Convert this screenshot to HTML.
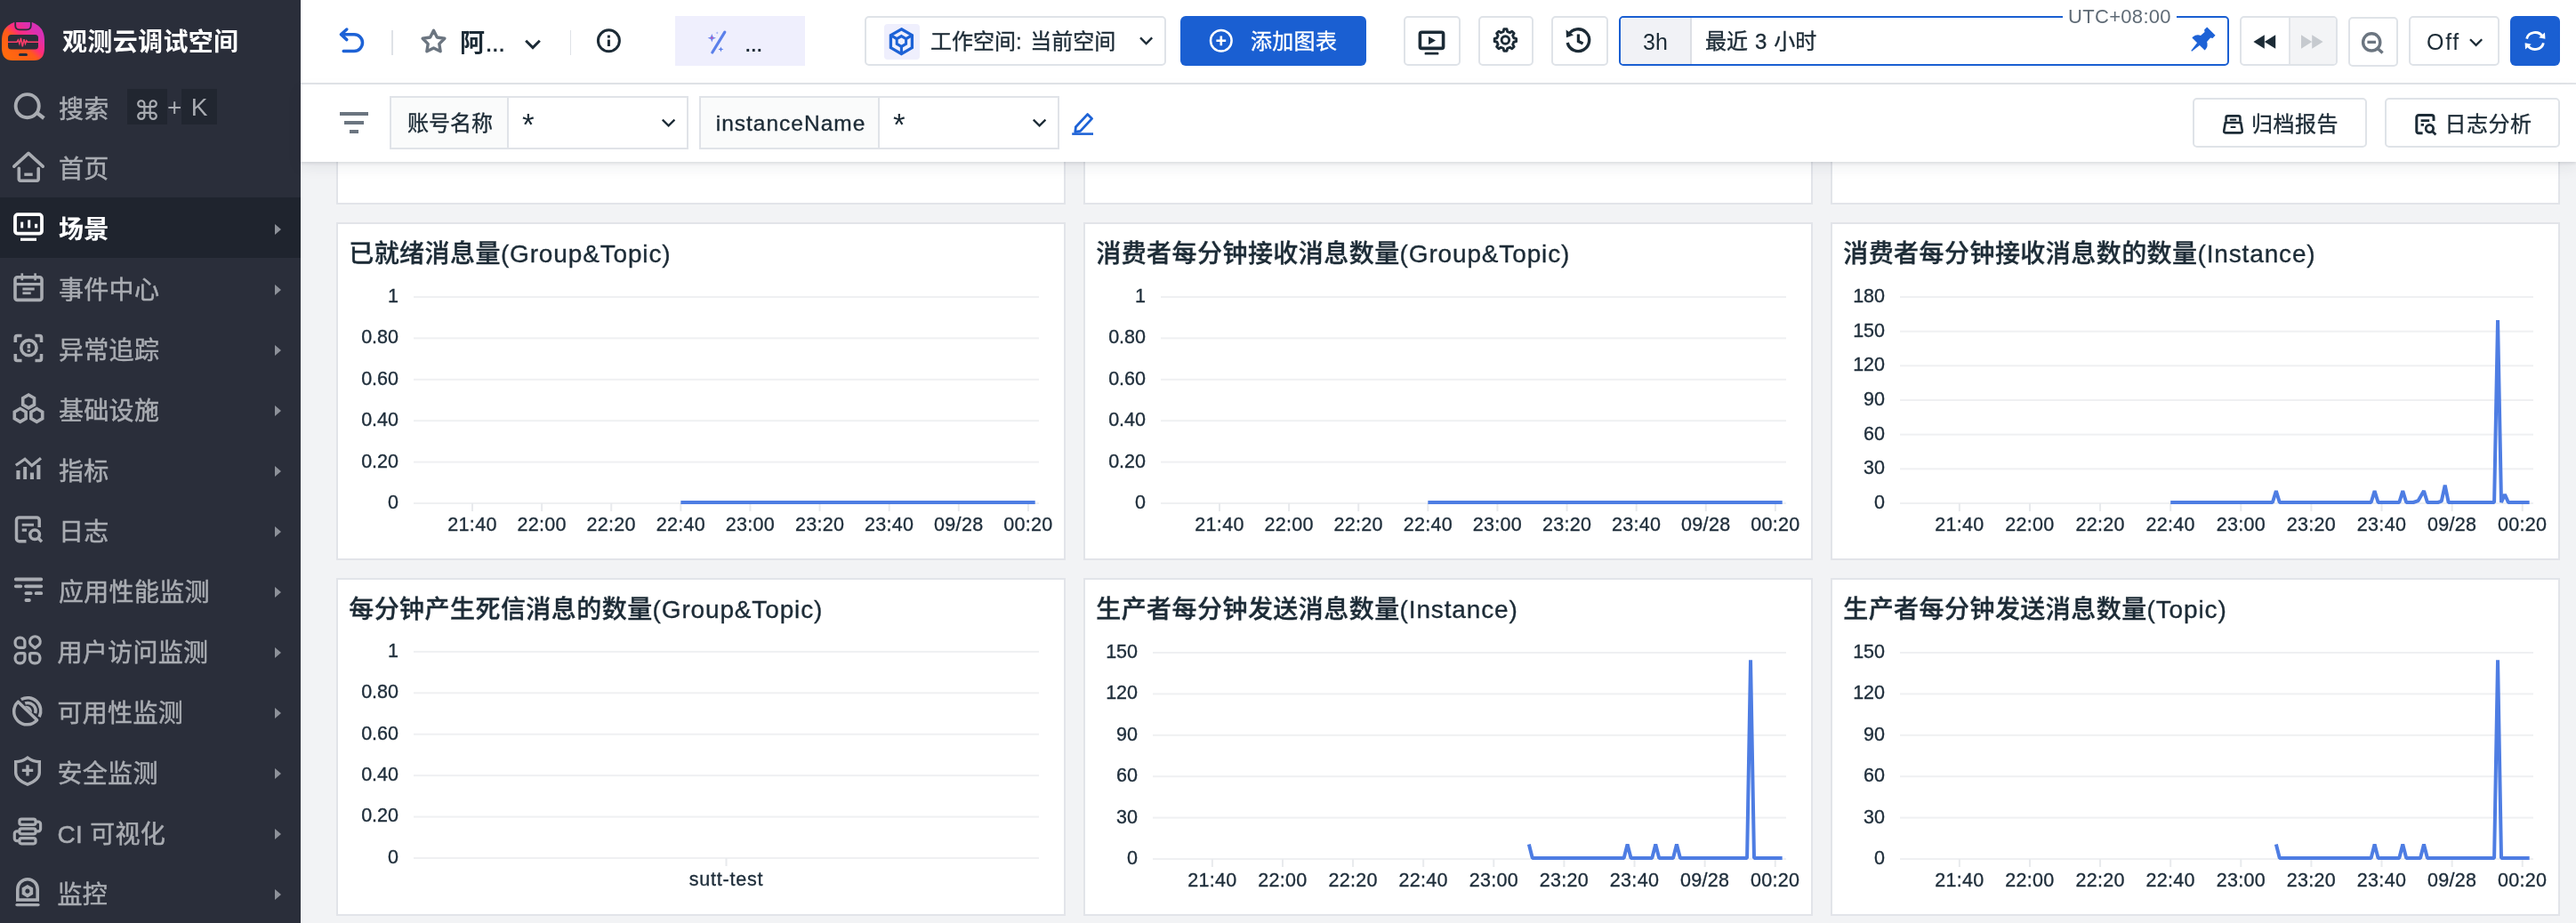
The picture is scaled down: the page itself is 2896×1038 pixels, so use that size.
<!DOCTYPE html><html lang="zh-CN"><head><meta charset="utf-8"><title>观测云</title><style>

*{box-sizing:border-box;margin:0;padding:0}
html{background:#f2f3f5}
#side,#head,#filt,.panel{will-change:transform}
html,body{width:2896px;height:1038px;overflow:hidden;background:#f2f3f5;font-family:"Liberation Sans", "Noto Sans CJK SC", sans-serif;color:#1c2b36}
.abs{position:absolute}
#side{position:absolute;left:0;top:0;width:338px;height:1038px;background:#2a2e3a;overflow:hidden}
#side .title{position:absolute;left:70px;top:26px;height:44px;line-height:44px;font-size:28px;font-weight:700;color:#fff;white-space:nowrap;letter-spacing:0.35px}
.row{position:absolute;left:0;width:338px;height:68px}
.row.act{background:#1f242e}
.row svg.ic{position:absolute;left:12px;top:14px;width:40px;height:40px;overflow:visible}
.row .tx{position:absolute;left:66px;top:2px;height:68px;line-height:69px;font-size:28px;color:#a9acb2;white-space:nowrap;letter-spacing:0.3px;-webkit-text-stroke:0.5px currentColor}
.row.act .tx{color:#fff;font-weight:700;-webkit-text-stroke:0.2px #fff}
.row .ar{position:absolute;left:309px;top:30px;width:0;height:0;border-left:7px solid #8d9199;border-top:6px solid transparent;border-bottom:6px solid transparent}
.kbd{position:absolute;top:14px;height:40px;background:#212630;color:#a9acb2;font-size:28px;line-height:40px;text-align:center}
#head{position:absolute;left:338px;top:0;width:2558px;height:95px;background:#fff;border-bottom:2px solid #e2e5e9}
#filt{position:absolute;left:338px;top:95px;width:2558px;height:87px;background:#fff;box-shadow:0 2px 3px rgba(30,40,60,.10),0 6px 16px rgba(30,40,60,.07);z-index:5}
.btn{position:absolute;border:2px solid #dfe3e8;border-radius:5px;background:#fff}
.t24{font-size:24px;white-space:nowrap;position:absolute;-webkit-text-stroke:0.35px currentColor}
.panel{position:absolute;width:820px;background:#fff;border:2px solid #e2e4e9}
.panel svg{position:absolute;left:-2px;top:-2px}
svg text{font-family:"Liberation Sans", "Noto Sans CJK SC", sans-serif;stroke-width:0.35px}
</style></head><body>
<div class="panel" style="left:378px;top:120px;height:110px"></div>
<div class="panel" style="left:1218px;top:120px;height:110px"></div>
<div class="panel" style="left:2058px;top:120px;height:110px"></div>
<div class="panel" style="left:378px;top:250px;height:380px"><svg width="820" height="380" viewBox="0 0 820 380"><text x="14.2" y="45" font-size="28" font-weight="500" fill="#1c2b36" stroke="#1c2b36" style="letter-spacing:0.45px">已就绪消息量<tspan style="letter-spacing:0.85px">(Group&amp;Topic)</tspan></text><rect x="87" y="83.00" width="703.0" height="2" fill="#eff0f2"/><text x="70" y="89.90" font-size="21.5" text-anchor="end" fill="#1e2d3a" stroke="#1e2d3a">1</text><rect x="87" y="129.40" width="703.0" height="2" fill="#eff0f2"/><text x="70" y="136.30" font-size="21.5" text-anchor="end" fill="#1e2d3a" stroke="#1e2d3a">0.80</text><rect x="87" y="175.80" width="703.0" height="2" fill="#eff0f2"/><text x="70" y="182.70" font-size="21.5" text-anchor="end" fill="#1e2d3a" stroke="#1e2d3a">0.60</text><rect x="87" y="222.20" width="703.0" height="2" fill="#eff0f2"/><text x="70" y="229.10" font-size="21.5" text-anchor="end" fill="#1e2d3a" stroke="#1e2d3a">0.40</text><rect x="87" y="268.60" width="703.0" height="2" fill="#eff0f2"/><text x="70" y="275.50" font-size="21.5" text-anchor="end" fill="#1e2d3a" stroke="#1e2d3a">0.20</text><rect x="87" y="315.00" width="703.0" height="2" fill="#eff0f2"/><text x="70" y="321.90" font-size="21.5" text-anchor="end" fill="#1e2d3a" stroke="#1e2d3a">0</text><rect x="152.00" y="316.0" width="2" height="9" fill="#e8eaed"/><text x="153.00" y="347.0" font-size="21.5" text-anchor="middle" fill="#1e2d3a" stroke="#1e2d3a" style="letter-spacing:0.3px">21:40</text><rect x="230.11" y="316.0" width="2" height="9" fill="#e8eaed"/><text x="231.11" y="347.0" font-size="21.5" text-anchor="middle" fill="#1e2d3a" stroke="#1e2d3a" style="letter-spacing:0.3px">22:00</text><rect x="308.23" y="316.0" width="2" height="9" fill="#e8eaed"/><text x="309.23" y="347.0" font-size="21.5" text-anchor="middle" fill="#1e2d3a" stroke="#1e2d3a" style="letter-spacing:0.3px">22:20</text><rect x="386.34" y="316.0" width="2" height="9" fill="#e8eaed"/><text x="387.34" y="347.0" font-size="21.5" text-anchor="middle" fill="#1e2d3a" stroke="#1e2d3a" style="letter-spacing:0.3px">22:40</text><rect x="464.45" y="316.0" width="2" height="9" fill="#e8eaed"/><text x="465.45" y="347.0" font-size="21.5" text-anchor="middle" fill="#1e2d3a" stroke="#1e2d3a" style="letter-spacing:0.3px">23:00</text><rect x="542.56" y="316.0" width="2" height="9" fill="#e8eaed"/><text x="543.56" y="347.0" font-size="21.5" text-anchor="middle" fill="#1e2d3a" stroke="#1e2d3a" style="letter-spacing:0.3px">23:20</text><rect x="620.67" y="316.0" width="2" height="9" fill="#e8eaed"/><text x="621.67" y="347.0" font-size="21.5" text-anchor="middle" fill="#1e2d3a" stroke="#1e2d3a" style="letter-spacing:0.3px">23:40</text><rect x="698.78" y="316.0" width="2" height="9" fill="#e8eaed"/><text x="699.78" y="347.0" font-size="21.5" text-anchor="middle" fill="#1e2d3a" stroke="#1e2d3a" style="letter-spacing:0.3px">09/28</text><rect x="776.89" y="316.0" width="2" height="9" fill="#e8eaed"/><text x="777.89" y="347.0" font-size="21.5" text-anchor="middle" fill="#1e2d3a" stroke="#1e2d3a" style="letter-spacing:0.3px">00:20</text><path d="M387.34 315.00 L785.70 315.00" fill="none" stroke="#4e7de3" stroke-width="4" stroke-linejoin="bevel" stroke-linecap="butt"/></svg></div>
<div class="panel" style="left:1218px;top:250px;height:380px"><svg width="820" height="380" viewBox="0 0 820 380"><text x="14.2" y="45" font-size="28" font-weight="500" fill="#1c2b36" stroke="#1c2b36" style="letter-spacing:0.45px">消费者每分钟接收消息数量<tspan style="letter-spacing:0.85px">(Group&amp;Topic)</tspan></text><rect x="87" y="83.00" width="703.0" height="2" fill="#eff0f2"/><text x="70" y="89.90" font-size="21.5" text-anchor="end" fill="#1e2d3a" stroke="#1e2d3a">1</text><rect x="87" y="129.40" width="703.0" height="2" fill="#eff0f2"/><text x="70" y="136.30" font-size="21.5" text-anchor="end" fill="#1e2d3a" stroke="#1e2d3a">0.80</text><rect x="87" y="175.80" width="703.0" height="2" fill="#eff0f2"/><text x="70" y="182.70" font-size="21.5" text-anchor="end" fill="#1e2d3a" stroke="#1e2d3a">0.60</text><rect x="87" y="222.20" width="703.0" height="2" fill="#eff0f2"/><text x="70" y="229.10" font-size="21.5" text-anchor="end" fill="#1e2d3a" stroke="#1e2d3a">0.40</text><rect x="87" y="268.60" width="703.0" height="2" fill="#eff0f2"/><text x="70" y="275.50" font-size="21.5" text-anchor="end" fill="#1e2d3a" stroke="#1e2d3a">0.20</text><rect x="87" y="315.00" width="703.0" height="2" fill="#eff0f2"/><text x="70" y="321.90" font-size="21.5" text-anchor="end" fill="#1e2d3a" stroke="#1e2d3a">0</text><rect x="152.00" y="316.0" width="2" height="9" fill="#e8eaed"/><text x="153.00" y="347.0" font-size="21.5" text-anchor="middle" fill="#1e2d3a" stroke="#1e2d3a" style="letter-spacing:0.3px">21:40</text><rect x="230.11" y="316.0" width="2" height="9" fill="#e8eaed"/><text x="231.11" y="347.0" font-size="21.5" text-anchor="middle" fill="#1e2d3a" stroke="#1e2d3a" style="letter-spacing:0.3px">22:00</text><rect x="308.23" y="316.0" width="2" height="9" fill="#e8eaed"/><text x="309.23" y="347.0" font-size="21.5" text-anchor="middle" fill="#1e2d3a" stroke="#1e2d3a" style="letter-spacing:0.3px">22:20</text><rect x="386.34" y="316.0" width="2" height="9" fill="#e8eaed"/><text x="387.34" y="347.0" font-size="21.5" text-anchor="middle" fill="#1e2d3a" stroke="#1e2d3a" style="letter-spacing:0.3px">22:40</text><rect x="464.45" y="316.0" width="2" height="9" fill="#e8eaed"/><text x="465.45" y="347.0" font-size="21.5" text-anchor="middle" fill="#1e2d3a" stroke="#1e2d3a" style="letter-spacing:0.3px">23:00</text><rect x="542.56" y="316.0" width="2" height="9" fill="#e8eaed"/><text x="543.56" y="347.0" font-size="21.5" text-anchor="middle" fill="#1e2d3a" stroke="#1e2d3a" style="letter-spacing:0.3px">23:20</text><rect x="620.67" y="316.0" width="2" height="9" fill="#e8eaed"/><text x="621.67" y="347.0" font-size="21.5" text-anchor="middle" fill="#1e2d3a" stroke="#1e2d3a" style="letter-spacing:0.3px">23:40</text><rect x="698.78" y="316.0" width="2" height="9" fill="#e8eaed"/><text x="699.78" y="347.0" font-size="21.5" text-anchor="middle" fill="#1e2d3a" stroke="#1e2d3a" style="letter-spacing:0.3px">09/28</text><rect x="776.89" y="316.0" width="2" height="9" fill="#e8eaed"/><text x="777.89" y="347.0" font-size="21.5" text-anchor="middle" fill="#1e2d3a" stroke="#1e2d3a" style="letter-spacing:0.3px">00:20</text><path d="M387.34 315.00 L785.70 315.00" fill="none" stroke="#4e7de3" stroke-width="4" stroke-linejoin="bevel" stroke-linecap="butt"/></svg></div>
<div class="panel" style="left:2058px;top:250px;height:380px"><svg width="820" height="380" viewBox="0 0 820 380"><text x="14.2" y="45" font-size="28" font-weight="500" fill="#1c2b36" stroke="#1c2b36" style="letter-spacing:0.45px">消费者每分钟接收消息数的数量<tspan style="letter-spacing:0.85px">(Instance)</tspan></text><rect x="78" y="83.00" width="712.0" height="2" fill="#eff0f2"/><text x="61" y="89.90" font-size="21.5" text-anchor="end" fill="#1e2d3a" stroke="#1e2d3a">180</text><rect x="78" y="121.67" width="712.0" height="2" fill="#eff0f2"/><text x="61" y="128.57" font-size="21.5" text-anchor="end" fill="#1e2d3a" stroke="#1e2d3a">150</text><rect x="78" y="160.33" width="712.0" height="2" fill="#eff0f2"/><text x="61" y="167.23" font-size="21.5" text-anchor="end" fill="#1e2d3a" stroke="#1e2d3a">120</text><rect x="78" y="199.00" width="712.0" height="2" fill="#eff0f2"/><text x="61" y="205.90" font-size="21.5" text-anchor="end" fill="#1e2d3a" stroke="#1e2d3a">90</text><rect x="78" y="237.67" width="712.0" height="2" fill="#eff0f2"/><text x="61" y="244.57" font-size="21.5" text-anchor="end" fill="#1e2d3a" stroke="#1e2d3a">60</text><rect x="78" y="276.33" width="712.0" height="2" fill="#eff0f2"/><text x="61" y="283.23" font-size="21.5" text-anchor="end" fill="#1e2d3a" stroke="#1e2d3a">30</text><rect x="78" y="315.00" width="712.0" height="2" fill="#eff0f2"/><text x="61" y="321.90" font-size="21.5" text-anchor="end" fill="#1e2d3a" stroke="#1e2d3a">0</text><rect x="143.85" y="316.0" width="2" height="9" fill="#e8eaed"/><text x="144.85" y="347.0" font-size="21.5" text-anchor="middle" fill="#1e2d3a" stroke="#1e2d3a" style="letter-spacing:0.3px">21:40</text><rect x="222.96" y="316.0" width="2" height="9" fill="#e8eaed"/><text x="223.96" y="347.0" font-size="21.5" text-anchor="middle" fill="#1e2d3a" stroke="#1e2d3a" style="letter-spacing:0.3px">22:00</text><rect x="302.07" y="316.0" width="2" height="9" fill="#e8eaed"/><text x="303.07" y="347.0" font-size="21.5" text-anchor="middle" fill="#1e2d3a" stroke="#1e2d3a" style="letter-spacing:0.3px">22:20</text><rect x="381.18" y="316.0" width="2" height="9" fill="#e8eaed"/><text x="382.18" y="347.0" font-size="21.5" text-anchor="middle" fill="#1e2d3a" stroke="#1e2d3a" style="letter-spacing:0.3px">22:40</text><rect x="460.29" y="316.0" width="2" height="9" fill="#e8eaed"/><text x="461.29" y="347.0" font-size="21.5" text-anchor="middle" fill="#1e2d3a" stroke="#1e2d3a" style="letter-spacing:0.3px">23:00</text><rect x="539.40" y="316.0" width="2" height="9" fill="#e8eaed"/><text x="540.40" y="347.0" font-size="21.5" text-anchor="middle" fill="#1e2d3a" stroke="#1e2d3a" style="letter-spacing:0.3px">23:20</text><rect x="618.52" y="316.0" width="2" height="9" fill="#e8eaed"/><text x="619.52" y="347.0" font-size="21.5" text-anchor="middle" fill="#1e2d3a" stroke="#1e2d3a" style="letter-spacing:0.3px">23:40</text><rect x="697.63" y="316.0" width="2" height="9" fill="#e8eaed"/><text x="698.63" y="347.0" font-size="21.5" text-anchor="middle" fill="#1e2d3a" stroke="#1e2d3a" style="letter-spacing:0.3px">09/28</text><rect x="776.74" y="316.0" width="2" height="9" fill="#e8eaed"/><text x="777.74" y="347.0" font-size="21.5" text-anchor="middle" fill="#1e2d3a" stroke="#1e2d3a" style="letter-spacing:0.3px">00:20</text><path d="M382.18 315.00 L496.89 315.00 L500.85 302.11 L504.80 315.00 L607.65 315.00 L611.60 302.11 L615.56 315.00 L639.29 315.00 L643.25 302.11 L647.20 315.00 L655.12 315.00 L660.65 313.07 L666.98 302.11 L670.94 315.00 L682.80 315.00 L686.76 313.71 L690.72 295.67 L694.67 315.00 L746.09 315.00 L750.05 110.07 L754.00 315.00 L757.96 305.98 L761.92 315.00 L785.65 315.00" fill="none" stroke="#4e7de3" stroke-width="4" stroke-linejoin="bevel" stroke-linecap="butt"/></svg></div>
<div class="panel" style="left:378px;top:650px;height:380px"><svg width="820" height="380" viewBox="0 0 820 380"><text x="14.2" y="45" font-size="28" font-weight="500" fill="#1c2b36" stroke="#1c2b36" style="letter-spacing:0.45px">每分钟产生死信消息的数量<tspan style="letter-spacing:0.85px">(Group&amp;Topic)</tspan></text><rect x="87" y="81.90" width="703.0" height="2" fill="#eff0f2"/><text x="70" y="88.80" font-size="21.5" text-anchor="end" fill="#1e2d3a" stroke="#1e2d3a">1</text><rect x="87" y="128.32" width="703.0" height="2" fill="#eff0f2"/><text x="70" y="135.22" font-size="21.5" text-anchor="end" fill="#1e2d3a" stroke="#1e2d3a">0.80</text><rect x="87" y="174.74" width="703.0" height="2" fill="#eff0f2"/><text x="70" y="181.64" font-size="21.5" text-anchor="end" fill="#1e2d3a" stroke="#1e2d3a">0.60</text><rect x="87" y="221.16" width="703.0" height="2" fill="#eff0f2"/><text x="70" y="228.06" font-size="21.5" text-anchor="end" fill="#1e2d3a" stroke="#1e2d3a">0.40</text><rect x="87" y="267.58" width="703.0" height="2" fill="#eff0f2"/><text x="70" y="274.48" font-size="21.5" text-anchor="end" fill="#1e2d3a" stroke="#1e2d3a">0.20</text><rect x="87" y="314.00" width="703.0" height="2" fill="#eff0f2"/><text x="70" y="320.90" font-size="21.5" text-anchor="end" fill="#1e2d3a" stroke="#1e2d3a">0</text><rect x="437.50" y="315.0" width="2" height="9" fill="#e8eaed"/><text x="438.50" y="346.0" font-size="21.5" text-anchor="middle" fill="#1e2d3a" stroke="#1e2d3a" style="letter-spacing:0.8px">sutt-test</text></svg></div>
<div class="panel" style="left:1218px;top:650px;height:380px"><svg width="820" height="380" viewBox="0 0 820 380"><text x="14.2" y="45" font-size="28" font-weight="500" fill="#1c2b36" stroke="#1c2b36" style="letter-spacing:0.45px">生产者每分钟发送消息数量<tspan style="letter-spacing:0.85px">(Instance)</tspan></text><rect x="78" y="83.00" width="712.0" height="2" fill="#eff0f2"/><text x="61" y="89.90" font-size="21.5" text-anchor="end" fill="#1e2d3a" stroke="#1e2d3a">150</text><rect x="78" y="129.40" width="712.0" height="2" fill="#eff0f2"/><text x="61" y="136.30" font-size="21.5" text-anchor="end" fill="#1e2d3a" stroke="#1e2d3a">120</text><rect x="78" y="175.80" width="712.0" height="2" fill="#eff0f2"/><text x="61" y="182.70" font-size="21.5" text-anchor="end" fill="#1e2d3a" stroke="#1e2d3a">90</text><rect x="78" y="222.20" width="712.0" height="2" fill="#eff0f2"/><text x="61" y="229.10" font-size="21.5" text-anchor="end" fill="#1e2d3a" stroke="#1e2d3a">60</text><rect x="78" y="268.60" width="712.0" height="2" fill="#eff0f2"/><text x="61" y="275.50" font-size="21.5" text-anchor="end" fill="#1e2d3a" stroke="#1e2d3a">30</text><rect x="78" y="315.00" width="712.0" height="2" fill="#eff0f2"/><text x="61" y="321.90" font-size="21.5" text-anchor="end" fill="#1e2d3a" stroke="#1e2d3a">0</text><rect x="143.85" y="316.0" width="2" height="9" fill="#e8eaed"/><text x="144.85" y="347.0" font-size="21.5" text-anchor="middle" fill="#1e2d3a" stroke="#1e2d3a" style="letter-spacing:0.3px">21:40</text><rect x="222.96" y="316.0" width="2" height="9" fill="#e8eaed"/><text x="223.96" y="347.0" font-size="21.5" text-anchor="middle" fill="#1e2d3a" stroke="#1e2d3a" style="letter-spacing:0.3px">22:00</text><rect x="302.07" y="316.0" width="2" height="9" fill="#e8eaed"/><text x="303.07" y="347.0" font-size="21.5" text-anchor="middle" fill="#1e2d3a" stroke="#1e2d3a" style="letter-spacing:0.3px">22:20</text><rect x="381.18" y="316.0" width="2" height="9" fill="#e8eaed"/><text x="382.18" y="347.0" font-size="21.5" text-anchor="middle" fill="#1e2d3a" stroke="#1e2d3a" style="letter-spacing:0.3px">22:40</text><rect x="460.29" y="316.0" width="2" height="9" fill="#e8eaed"/><text x="461.29" y="347.0" font-size="21.5" text-anchor="middle" fill="#1e2d3a" stroke="#1e2d3a" style="letter-spacing:0.3px">23:00</text><rect x="539.40" y="316.0" width="2" height="9" fill="#e8eaed"/><text x="540.40" y="347.0" font-size="21.5" text-anchor="middle" fill="#1e2d3a" stroke="#1e2d3a" style="letter-spacing:0.3px">23:20</text><rect x="618.52" y="316.0" width="2" height="9" fill="#e8eaed"/><text x="619.52" y="347.0" font-size="21.5" text-anchor="middle" fill="#1e2d3a" stroke="#1e2d3a" style="letter-spacing:0.3px">23:40</text><rect x="697.63" y="316.0" width="2" height="9" fill="#e8eaed"/><text x="698.63" y="347.0" font-size="21.5" text-anchor="middle" fill="#1e2d3a" stroke="#1e2d3a" style="letter-spacing:0.3px">09/28</text><rect x="776.74" y="316.0" width="2" height="9" fill="#e8eaed"/><text x="777.74" y="347.0" font-size="21.5" text-anchor="middle" fill="#1e2d3a" stroke="#1e2d3a" style="letter-spacing:0.3px">00:20</text><path d="M500.85 299.53 L504.80 315.00 L607.65 315.00 L611.60 299.53 L615.56 315.00 L639.29 315.00 L643.25 299.53 L647.20 315.00 L663.03 315.00 L666.98 299.53 L670.94 315.00 L746.09 315.00 L750.05 92.28 L754.00 315.00 L785.65 315.00" fill="none" stroke="#4e7de3" stroke-width="4" stroke-linejoin="bevel" stroke-linecap="butt"/></svg></div>
<div class="panel" style="left:2058px;top:650px;height:380px"><svg width="820" height="380" viewBox="0 0 820 380"><text x="14.2" y="45" font-size="28" font-weight="500" fill="#1c2b36" stroke="#1c2b36" style="letter-spacing:0.45px">生产者每分钟发送消息数量<tspan style="letter-spacing:0.85px">(Topic)</tspan></text><rect x="78" y="83.00" width="712.0" height="2" fill="#eff0f2"/><text x="61" y="89.90" font-size="21.5" text-anchor="end" fill="#1e2d3a" stroke="#1e2d3a">150</text><rect x="78" y="129.40" width="712.0" height="2" fill="#eff0f2"/><text x="61" y="136.30" font-size="21.5" text-anchor="end" fill="#1e2d3a" stroke="#1e2d3a">120</text><rect x="78" y="175.80" width="712.0" height="2" fill="#eff0f2"/><text x="61" y="182.70" font-size="21.5" text-anchor="end" fill="#1e2d3a" stroke="#1e2d3a">90</text><rect x="78" y="222.20" width="712.0" height="2" fill="#eff0f2"/><text x="61" y="229.10" font-size="21.5" text-anchor="end" fill="#1e2d3a" stroke="#1e2d3a">60</text><rect x="78" y="268.60" width="712.0" height="2" fill="#eff0f2"/><text x="61" y="275.50" font-size="21.5" text-anchor="end" fill="#1e2d3a" stroke="#1e2d3a">30</text><rect x="78" y="315.00" width="712.0" height="2" fill="#eff0f2"/><text x="61" y="321.90" font-size="21.5" text-anchor="end" fill="#1e2d3a" stroke="#1e2d3a">0</text><rect x="143.85" y="316.0" width="2" height="9" fill="#e8eaed"/><text x="144.85" y="347.0" font-size="21.5" text-anchor="middle" fill="#1e2d3a" stroke="#1e2d3a" style="letter-spacing:0.3px">21:40</text><rect x="222.96" y="316.0" width="2" height="9" fill="#e8eaed"/><text x="223.96" y="347.0" font-size="21.5" text-anchor="middle" fill="#1e2d3a" stroke="#1e2d3a" style="letter-spacing:0.3px">22:00</text><rect x="302.07" y="316.0" width="2" height="9" fill="#e8eaed"/><text x="303.07" y="347.0" font-size="21.5" text-anchor="middle" fill="#1e2d3a" stroke="#1e2d3a" style="letter-spacing:0.3px">22:20</text><rect x="381.18" y="316.0" width="2" height="9" fill="#e8eaed"/><text x="382.18" y="347.0" font-size="21.5" text-anchor="middle" fill="#1e2d3a" stroke="#1e2d3a" style="letter-spacing:0.3px">22:40</text><rect x="460.29" y="316.0" width="2" height="9" fill="#e8eaed"/><text x="461.29" y="347.0" font-size="21.5" text-anchor="middle" fill="#1e2d3a" stroke="#1e2d3a" style="letter-spacing:0.3px">23:00</text><rect x="539.40" y="316.0" width="2" height="9" fill="#e8eaed"/><text x="540.40" y="347.0" font-size="21.5" text-anchor="middle" fill="#1e2d3a" stroke="#1e2d3a" style="letter-spacing:0.3px">23:20</text><rect x="618.52" y="316.0" width="2" height="9" fill="#e8eaed"/><text x="619.52" y="347.0" font-size="21.5" text-anchor="middle" fill="#1e2d3a" stroke="#1e2d3a" style="letter-spacing:0.3px">23:40</text><rect x="697.63" y="316.0" width="2" height="9" fill="#e8eaed"/><text x="698.63" y="347.0" font-size="21.5" text-anchor="middle" fill="#1e2d3a" stroke="#1e2d3a" style="letter-spacing:0.3px">09/28</text><rect x="776.74" y="316.0" width="2" height="9" fill="#e8eaed"/><text x="777.74" y="347.0" font-size="21.5" text-anchor="middle" fill="#1e2d3a" stroke="#1e2d3a" style="letter-spacing:0.3px">00:20</text><path d="M500.85 299.53 L504.80 315.00 L607.65 315.00 L611.60 299.53 L615.56 315.00 L639.29 315.00 L643.25 299.53 L647.20 315.00 L663.03 315.00 L666.98 299.53 L670.94 315.00 L746.09 315.00 L750.05 92.28 L754.00 315.00 L785.65 315.00" fill="none" stroke="#4e7de3" stroke-width="4" stroke-linejoin="bevel" stroke-linecap="butt"/></svg></div><div id="head">
<svg class="abs" style="left:40px;top:28px" width="36" height="36" viewBox="0 0 36 36"><path d="M11.8 5 L5.4 10.8 L11.8 16.6 M5.8 10.8 H20.2 a9.3 9.3 0 0 1 0 18.6 H8.2" fill="none" stroke="#1d62d6" stroke-width="3.5" stroke-linecap="round" stroke-linejoin="round"/></svg>
<div class="abs" style="left:102px;top:34px;width:2px;height:28px;background:#dfe2e7"></div>
<svg class="abs" style="left:132px;top:28px" width="36" height="36" viewBox="0 0 36 36"><path d="M17.50 6.30 L21.38 13.96 L29.86 15.28 L23.78 21.34 L25.14 29.82 L17.50 25.90 L9.86 29.82 L11.22 21.34 L5.14 15.28 L13.62 13.96 Z" fill="none" stroke="#6b7580" stroke-width="3.4" stroke-linejoin="round"/></svg>
<div class="abs" style="left:179px;top:25.5px;height:46px;line-height:46px;font-size:28px;font-weight:700;color:#1c2b36;white-space:nowrap">阿<span style="letter-spacing:1.2px;margin-left:1.4px;font-size:22px">...</span></div>
<svg class="abs" style="left:250px;top:40px" width="22" height="20" viewBox="0 0 22 20"><path d="M3.2 5.8 L11 13.6 L18.8 5.8" fill="none" stroke="#1c2b36" stroke-width="3"/></svg>
<div class="abs" style="left:303px;top:34px;width:1px;height:28px;background:#dfe2e7"></div>
<svg class="abs" style="left:330px;top:29px" width="34" height="34" viewBox="0 0 34 34"><circle cx="16.4" cy="16.8" r="12" fill="none" stroke="#1c2b36" stroke-width="3"/><rect x="14.9" y="10.6" width="3" height="3" fill="#1c2b36"/><rect x="14.9" y="15.6" width="3" height="7.4" fill="#1c2b36"/></svg>
<div class="abs" style="left:421px;top:18px;width:146px;height:56px;background:#efeffd"></div>
<svg class="abs" style="left:454px;top:30px" width="30" height="34" viewBox="0 0 30 34"><path d="M8.8 29 L22.8 6.2" stroke="#5b80ea" stroke-width="3.2" stroke-linecap="round"/>
<path d="M8.3 8 L9.6 11.5 L13 12.8 L9.6 14.1 L8.3 17.6 L7 14.1 L3.6 12.8 L7 11.5 Z" fill="#6f86ee"/><circle cx="8.3" cy="12.6" r="1" fill="#e0409a"/>
<path d="M18.4 22.4 L19.2 24.6 L21.4 25.4 L19.2 26.2 L18.4 28.4 L17.6 26.2 L15.4 25.4 L17.6 24.6 Z" fill="#5b80ea"/><path d="M14.2 5.4 L14.6 6.6 L15.8 7 L14.6 7.4 L14.2 8.6 L13.8 7.4 L12.6 7 L13.8 6.6 Z" fill="#8ea2f2"/></svg>
<div class="abs" style="left:500px;top:27.5px;height:46px;line-height:46px;font-size:20px;font-weight:700;letter-spacing:1px;color:#1c2b36">...</div>
<div class="btn" style="left:634px;top:18px;width:339px;height:56px;border-radius:5px"></div>
<div class="abs" style="left:656px;top:27px;width:40px;height:40px;border-radius:4px;background:#efeffd"></div>
<svg class="abs" style="left:658px;top:29px" width="36" height="36" viewBox="0 0 36 36"><path d="M17.4 3.8 L29.4 10.6 V24.6 L17.4 31.6 L5.4 24.6 V10.6 Z" fill="none" stroke="#1d62d6" stroke-width="3.3" stroke-linejoin="miter"/>
<path d="M17.4 11.6 L22.6 14.6 V20.4 L17.4 23.4 L12.2 20.4 V14.6 Z" fill="none" stroke="#1d62d6" stroke-width="3"/><path d="M17.4 23.4 V31 M5.8 10.8 L12.2 14.6 M29 10.8 L22.6 14.6" stroke="#1d62d6" stroke-width="3.1"/></svg>
<div class="t24" style="left:708px;top:24px;height:46px;line-height:46px;color:#1c2b36;word-spacing:3px">工作空间: 当前空间</div>
<svg class="abs" style="left:940px;top:36px" width="22" height="20" viewBox="0 0 22 20"><path d="M4 6.4 L10.6 13 L17.2 6.4" fill="none" stroke="#1c2b36" stroke-width="2.3"/></svg>
<div class="abs" style="left:989px;top:18px;width:209px;height:56px;border-radius:6px;background:#1a5fd2"></div>
<svg class="abs" style="left:1018px;top:29px" width="34" height="34" viewBox="0 0 34 34"><circle cx="16.8" cy="16.8" r="11.8" fill="none" stroke="#fff" stroke-width="2.5"/><path d="M11.4 16.8 H22.2 M16.8 11.4 V22.2" stroke="#fff" stroke-width="2.6"/></svg>
<div class="t24" style="left:1068px;top:24px;height:46px;line-height:46px;color:#fff;letter-spacing:0.3px">添加图表</div>
<div class="btn" style="left:1240px;top:18px;width:64px;height:56px"></div>
<svg class="abs" style="left:1252px;top:28px" width="40" height="38" viewBox="0 0 40 38"><rect x="6.4" y="8.2" width="26.2" height="18.2" rx="2" fill="none" stroke="#1c2b36" stroke-width="3.6"/><path d="M16 13 L24 17.6 L16 22.2 Z" fill="#1c2b36"/><rect x="11.6" y="30.8" width="15.8" height="2.8" rx="1.2" fill="#1c2b36"/></svg>
<div class="btn" style="left:1324px;top:18px;width:62px;height:56px"></div>
<svg class="abs" style="left:1336px;top:27px" width="38" height="38" viewBox="0 0 38 38"><path d="M16.14 8.57 L16.76 5.81 L20.04 5.81 L20.66 8.57 L23.47 9.73 L25.86 8.22 L28.18 10.54 L26.67 12.93 L27.83 15.74 L30.59 16.36 L30.59 19.64 L27.83 20.26 L26.67 23.07 L28.18 25.46 L25.86 27.78 L23.47 26.27 L20.66 27.43 L20.04 30.19 L16.76 30.19 L16.14 27.43 L13.33 26.27 L10.94 27.78 L8.62 25.46 L10.13 23.07 L8.97 20.26 L6.21 19.64 L6.21 16.36 L8.97 15.74 L10.13 12.93 L8.62 10.54 L10.94 8.22 L13.33 9.73 Z" fill="none" stroke="#1c2b36" stroke-width="2.9" stroke-linejoin="round"/><circle cx="18.4" cy="18" r="4.3" fill="none" stroke="#1c2b36" stroke-width="2.9"/></svg>
<div class="btn" style="left:1406px;top:18px;width:64px;height:56px"></div>
<svg class="abs" style="left:1418px;top:27px" width="38" height="38" viewBox="0 0 38 38"><path d="M7.4 12.2 A12.4 12.4 0 1 1 6.2 21" fill="none" stroke="#1c2b36" stroke-width="3.4"/><path d="M4.6 6.4 L5 15.2 L13 12.4 Z" fill="#1c2b36"/><path d="M18.4 11.4 V19.4 L23.6 22" fill="none" stroke="#1c2b36" stroke-width="3.2"/></svg>
<div class="abs" style="left:1482px;top:18px;width:686px;height:56px;border:2px solid #1a5fd2;border-radius:5px;background:#fff"></div>
<div class="abs" style="left:1484px;top:20px;width:80px;height:52px;background:#f1f2f6;border-right:2px solid #dcdfe5;border-radius:4px 0 0 4px"></div>
<div class="abs" style="left:1485px;top:24px;width:76px;height:46px;line-height:46px;text-align:center;font-size:25px;color:#1c2b36">3h</div>
<div class="t24" style="left:1579px;top:24px;height:46px;line-height:46px;color:#1c2b36;word-spacing:1.3px">最近 3 小时</div>
<div class="abs" style="left:1981px;top:4px;width:128px;height:30px;background:#fff;text-align:center;line-height:30px;font-size:22px;letter-spacing:0.3px;color:#5f6b76">UTC+08:00</div>
<svg class="abs" style="left:2120px;top:29px" width="34" height="34" viewBox="0 0 34 34"><g transform="rotate(45 17 17)" fill="#1d62d6"><path d="M10.4 1.6 H23.6 V6 L21.6 7.4 L22 13.4 Q26.6 15.6 27 20.8 V22 H7 V20.8 Q7.4 15.6 12 13.4 L12.4 7.4 L10.4 6 Z"/><path d="M15 21.6 H19 L17.6 33 H16.4 Z"/></g></svg>
<div class="btn" style="left:2180px;top:18px;width:110px;height:56px;overflow:hidden"><div class="abs" style="left:53px;top:0;width:55px;height:52px;background:#f3f4f6;border-left:2px solid #e2e5e9"></div></div>
<svg class="abs" style="left:2192px;top:36px" width="32" height="22" viewBox="0 0 32 22"><path d="M3.4 11 L15.8 3.2 V18.8 Z M15.8 11 L28.2 3.2 V18.8 Z" fill="#1c2b36"/></svg>
<svg class="abs" style="left:2246px;top:36px" width="32" height="22" viewBox="0 0 32 22"><path d="M3 3.2 L15.2 11 L3 18.8 Z M15.2 3.2 L27.6 11 L15.2 18.8 Z" fill="#c6cacf"/></svg>
<div class="btn" style="left:2302px;top:19px;width:56px;height:56px"></div>
<svg class="abs" style="left:2312px;top:31px" width="34" height="34" viewBox="0 0 34 34"><circle cx="16.2" cy="16.4" r="9.6" fill="none" stroke="#6b7580" stroke-width="3.4"/><path d="M11.4 16.4 H21 M23 23.4 L28.6 28.4" stroke="#6b7580" stroke-width="3.4" fill="none"/></svg>
<div class="btn" style="left:2370px;top:18px;width:102px;height:56px"></div>
<div class="abs" style="left:2390px;top:24px;height:46px;line-height:46px;font-size:25px;color:#1c2b36;letter-spacing:1.7px">Off</div>
<svg class="abs" style="left:2435px;top:38px" width="22" height="20" viewBox="0 0 22 20"><path d="M4 6.2 L10.6 12.8 L17.2 6.2" fill="none" stroke="#1c2b36" stroke-width="2.3"/></svg>
<div class="abs" style="left:2484px;top:18px;width:56px;height:56px;border-radius:6px;background:#1a5fd2"></div>
<svg class="abs" style="left:2496px;top:30px" width="32" height="32" viewBox="0 0 32 32"><path d="M6.6 13.6 A9.6 9 0 0 1 24.4 11.2" fill="none" stroke="#fff" stroke-width="2.8"/><path d="M27 6.4 L27.4 13.8 L20.2 12.2 Z" fill="#fff"/><path d="M25.4 18.4 A9.6 9 0 0 1 7.6 20.8" fill="none" stroke="#fff" stroke-width="2.8"/><path d="M5 25.6 L4.6 18.2 L11.8 19.8 Z" fill="#fff"/></svg>
</div>
<div id="filt">
<div class="abs" style="left:44px;top:31px;width:32px;height:4px;background:#6b7580"></div><div class="abs" style="left:49px;top:41px;width:22px;height:4px;background:#6b7580"></div><div class="abs" style="left:55px;top:51px;width:10px;height:4px;background:#6b7580"></div>
<div class="abs" style="left:100px;top:13px;width:336px;height:60px;border:2px solid #e0e3e8;background:#fff;border-radius:0"></div><div class="abs" style="left:102px;top:15px;width:132px;height:56px;background:#fafbfb;border-right:2px solid #e0e3e8"></div><div class="t24" style="left:102px;top:16px;width:132px;height:56px;line-height:56px;text-align:center;color:#1c2b36">账号名称</div><div class="abs" style="left:249px;top:24.5px;font-size:35px;line-height:40px;color:#1c2b36">*</div><svg class="abs" style="left:403px;top:33px" width="22" height="20" viewBox="0 0 22 20"><path d="M3.8 6.6 L10.6 13.4 L17.4 6.6" fill="none" stroke="#1c2b36" stroke-width="2.3"/></svg>
<div class="abs" style="left:448px;top:13px;width:405px;height:60px;border:2px solid #e0e3e8;background:#fff;border-radius:0"></div><div class="abs" style="left:450px;top:15px;width:201px;height:56px;background:#fafbfb;border-right:2px solid #e0e3e8"></div><div class="t24" style="left:450px;top:16px;width:201px;height:56px;line-height:56px;text-align:center;color:#1c2b36"><span style="font-size:24.5px;letter-spacing:1px;margin-left:1px">instanceName</span></div><div class="abs" style="left:666px;top:24.5px;font-size:35px;line-height:40px;color:#1c2b36">*</div><svg class="abs" style="left:820px;top:33px" width="22" height="20" viewBox="0 0 22 20"><path d="M3.8 6.6 L10.6 13.4 L17.4 6.6" fill="none" stroke="#1c2b36" stroke-width="2.3"/></svg>
<svg class="abs" style="left:864px;top:27px" width="32" height="32" viewBox="0 0 32 32"><path d="M7.4 20.8 L20.6 6.6 L25.6 11.4 L12.6 25.4 L6.8 26.4 Z" fill="none" stroke="#1d62d6" stroke-width="2.8" stroke-linejoin="round"/><path d="M3.2 28.6 H27" stroke="#1d62d6" stroke-width="2.6"/></svg>
<div class="btn" style="left:2127px;top:15px;width:196px;height:56px"></div>
<svg class="abs" style="left:2158px;top:31px" width="30" height="28" viewBox="0 0 30 28"><path d="M6.6 10.8 V6.4 a2 2 0 0 1 2 -2 H20.4 a2 2 0 0 1 2 2 V10.8" fill="none" stroke="#1c2b36" stroke-width="2.6"/><path d="M5.8 12 H23.2 L24.8 21.2 a1.8 1.8 0 0 1 -1.8 2.2 H6 a1.8 1.8 0 0 1 -1.8 -2.2 Z" fill="none" stroke="#1c2b36" stroke-width="2.6" stroke-linejoin="round"/><path d="M10.8 8.6 H18.2 M11.6 17 H17.4" stroke="#1c2b36" stroke-width="2.2"/></svg>
<div class="t24" style="left:2193px;top:22px;height:46px;line-height:46px;color:#1c2b36;letter-spacing:0.5px">归档报告</div>
<div class="btn" style="left:2343px;top:15px;width:197px;height:56px"></div>
<svg class="abs" style="left:2374px;top:30px" width="30" height="30" viewBox="0 0 30 30"><path d="M11.6 24.8 H7.2 a2.4 2.4 0 0 1 -2.4 -2.4 V7 a2.4 2.4 0 0 1 2.4 -2.4 H21.6 a2.4 2.4 0 0 1 2.4 2.4 V11" fill="none" stroke="#1c2b36" stroke-width="3"/><path d="M9.6 10.6 H19.2 M9.6 15.4 H13" stroke="#1c2b36" stroke-width="2.6"/><circle cx="19.4" cy="19.6" r="4.2" fill="none" stroke="#1c2b36" stroke-width="2.8"/><path d="M22.6 22.8 L26.4 26.4" stroke="#1c2b36" stroke-width="2.8"/></svg>
<div class="t24" style="left:2410.5px;top:22px;height:46px;line-height:46px;color:#1c2b36;letter-spacing:0.5px">日志分析</div>
</div><div id="side">
<svg class="abs" style="left:2px;top:24px" width="48" height="45" viewBox="0 0 48 45">
<defs><linearGradient id="lg" x1="0.1" y1="0.9" x2="0.9" y2="0.1"><stop offset="0" stop-color="#ff6a0d"/><stop offset="0.42" stop-color="#ff5a1a"/><stop offset="0.58" stop-color="#ff2c7a"/><stop offset="0.85" stop-color="#d930b4"/><stop offset="1" stop-color="#d930b4"/></linearGradient></defs>
<path d="M14 1 H34 Q48 6 48 21 V30 Q48 44 36 44 H12 Q0 44 0 30 V21 Q0 6 14 1 Z" fill="url(#lg)"/>
<path d="M15.2 0 V4.5 Q15.2 9.3 20 9.3 H28 Q32.8 9.3 32.8 4.5 V0" fill="none" stroke="#2a2e3a" stroke-width="1.8"/>
<rect x="7" y="15" width="34" height="16.5" rx="3.5" fill="#2a2e3a"/>
<path d="M7 23.2 H17 l1.4 -2.2 l1.5 4.2 l1.6 -6.4 l1.8 9.5 l1.7 -8.2 l1.5 5 l1.3 -3.4 l1.2 1.5 H41" fill="none" stroke="#ff3d6a" stroke-width="1.5"/>
<rect x="19" y="36" width="10" height="3" rx="1.5" fill="#2a2e3a"/>
</svg>
<div class="title">观测云调试空间</div>
<div class="row" style="top:87px"><svg class="ic" viewBox="0 0 40 40" style="top:16px"><circle cx="18.7" cy="16.2" r="13.05" fill="none" stroke="#a9acb2" stroke-width="3.9"/><path d="M28.6 23.2 L37.4 30" stroke="#a9acb2" stroke-width="4.2" stroke-linecap="butt" fill="none"/></svg><div class="tx">搜索</div><div class="kbd" style="left:143px;width:45px;top:13px;line-height:49px;overflow:hidden;font-family:'DejaVu Sans','Noto Sans CJK SC',sans-serif;font-size:30px">⌘</div><div class="abs" style="left:188px;top:15px;width:16px;height:40px;line-height:38px;text-align:center;font-size:28px;color:#a9acb2">+</div><div class="kbd" style="left:204px;width:40px;top:13px;line-height:42px">K</div></div>
<div class="row" style="top:154px"><svg class="ic" viewBox="0 0 40 40"><path d="M3.8 19.2 L20 4.4 L36.2 19.2" fill="none" stroke="#a9acb2" stroke-width="3.6" stroke-linejoin="round" stroke-linecap="round"/><path d="M9.3 21.2 V33.6 a1.6 1.6 0 0 0 1.6 1.6 H29.6 a1.6 1.6 0 0 0 1.6 -1.6 V21.6" fill="none" stroke="#a9acb2" stroke-width="3.6" stroke-linecap="round"/><path d="M15.3 28.2 H24.7" stroke="#a9acb2" stroke-width="3.4"/></svg><div class="tx">首页</div></div>
<div class="row act" style="top:222px"><svg class="ic" viewBox="0 0 40 40"><rect x="5" y="5.2" width="30" height="21.5" rx="3" fill="none" stroke="#ffffff" stroke-width="3.8"/><rect x="11.2" y="13.6" width="3" height="6.8" fill="#ffffff"/><rect x="19.2" y="11.4" width="3" height="9" fill="#ffffff"/><rect x="27" y="15.8" width="3.2" height="4.6" fill="#ffffff"/><rect x="11" y="31.7" width="18" height="3.2" fill="#ffffff"/></svg><div class="tx">场景</div><div class="ar"></div></div>
<div class="row" style="top:290px"><svg class="ic" viewBox="0 0 40 40"><rect x="5" y="7.8" width="30" height="25.6" rx="2.5" fill="none" stroke="#a9acb2" stroke-width="3.6"/><rect x="11.5" y="3.3" width="2.6" height="8" fill="#a9acb2"/><rect x="26.3" y="3.3" width="2.6" height="8" fill="#a9acb2"/><rect x="5" y="14" width="30" height="3.2" fill="#a9acb2"/><rect x="13.4" y="19.5" width="13.3" height="3" fill="#a9acb2"/><rect x="13.4" y="24.3" width="9.3" height="2.8" fill="#a9acb2"/></svg><div class="tx">事件中心</div><div class="ar"></div></div>
<div class="row" style="top:358px"><svg class="ic" viewBox="0 0 40 40"><path d="M5.3 13 V7.5 a2 2 0 0 1 2 -2 H12.5 M27.5 5.5 H32.5 a2 2 0 0 1 2 2 V13 M34.5 26 V31.5 a2 2 0 0 1 -2 2 H27.5 M12.5 33.5 H7.3 a2 2 0 0 1 -2 -2 V26" stroke="#a9acb2" stroke-width="3.6" fill="none"/><circle cx="20.4" cy="19.2" r="8.6" stroke="#a9acb2" stroke-width="3.6" fill="none"/><rect x="18.7" y="14.8" width="3.4" height="5" fill="#a9acb2"/><rect x="18.7" y="21.2" width="3.4" height="2.6" fill="#a9acb2"/></svg><div class="tx">异常追踪</div><div class="ar"></div></div>
<div class="row" style="top:426px"><svg class="ic" viewBox="0 0 40 40"><path d="M20.10 4.00 L26.51 7.70 L26.51 15.10 L20.10 18.80 L13.69 15.10 L13.69 7.70 Z" stroke="#a9acb2" stroke-width="3.6" fill="none" stroke-linejoin="miter"/><path d="M10.70 19.50 L17.11 23.20 L17.11 30.60 L10.70 34.30 L4.29 30.60 L4.29 23.20 Z" stroke="#a9acb2" stroke-width="3.6" fill="none" stroke-linejoin="miter"/><path d="M29.30 19.50 L35.71 23.20 L35.71 30.60 L29.30 34.30 L22.89 30.60 L22.89 23.20 Z" stroke="#a9acb2" stroke-width="3.6" fill="none" stroke-linejoin="miter"/></svg><div class="tx">基础设施</div><div class="ar"></div></div>
<div class="row" style="top:494px"><svg class="ic" viewBox="0 0 40 40"><rect x="6.4" y="21" width="4.1" height="10" fill="#a9acb2"/><rect x="14.2" y="17" width="3.9" height="14" fill="#a9acb2"/><rect x="21.9" y="23.5" width="4.1" height="7.5" fill="#a9acb2"/><rect x="29.3" y="15" width="4.1" height="16" fill="#a9acb2"/><path d="M5.8 15.2 L16 8.2 L23.8 15.6 L34 7.2" fill="none" stroke="#a9acb2" stroke-width="3.2"/></svg><div class="tx">指标</div><div class="ar"></div></div>
<div class="row" style="top:562px"><svg class="ic" viewBox="0 0 40 40"><g transform="translate(0,-1.1)"><path d="M17.5 33.8 H9.5 a3 3 0 0 1 -3 -3 V10 a3 3 0 0 1 3 -3 H29.2 a3 3 0 0 1 3 3 V18" stroke="#a9acb2" stroke-width="3.5" fill="none"/><path d="M12.7 15.4 H26 M12.7 21.2 H18" stroke="#a9acb2" stroke-width="3.1" fill="none"/><circle cx="27.1" cy="26.4" r="5.3" stroke="#a9acb2" stroke-width="3.5" fill="none"/><path d="M31 30.3 L35 34.4" stroke="#a9acb2" stroke-width="3.5" fill="none"/></g></svg><div class="tx">日志</div><div class="ar"></div></div>
<div class="row" style="top:630px"><svg class="ic" viewBox="0 0 40 40"><path d="M5.8 7.5 H34.3 M5.8 15.3 H11.3 M17 15.3 H34.3 M17.4 23.2 H22.7 M28.6 23.2 H34.3 M17.4 31 H20.9" stroke="#a9acb2" stroke-width="3.8" stroke-linecap="round" fill="none"/></svg><div class="tx">应用性能监测</div><div class="ar"></div></div>
<div class="row" style="top:698px"><svg class="ic" viewBox="0 0 40 40"><path d="M10.1 5.2 H10.9 a5 5 0 0 1 5 5 V14.9 a1.5 1.5 0 0 1 -1.5 1.5 H10.1 a5 5 0 0 1 -5 -5 V10.2 a5 5 0 0 1 5 -5 Z" stroke="#a9acb2" stroke-width="3.2" fill="none" stroke-linejoin="round"/><path d="M27.4 16.8 L22.8 13.1 A5.8 5.8 0 1 1 32 13.1 Z" stroke="#a9acb2" stroke-width="3.2" fill="none" stroke-linejoin="round"/><path d="M10.1 22.6 H14.4 a1.5 1.5 0 0 1 1.5 1.5 V28.8 a5 5 0 0 1 -5 5 H10.1 a5 5 0 0 1 -5 -5 V27.6 a5 5 0 0 1 5 -5 Z" stroke="#a9acb2" stroke-width="3.2" fill="none" stroke-linejoin="round"/><path d="M23.1 22.6 H27.9 a5 5 0 0 1 5 5 V28.8 a5 5 0 0 1 -5 5 H26.6 a5 5 0 0 1 -5 -5 V24.1 a1.5 1.5 0 0 1 1.5 -1.5 Z" stroke="#a9acb2" stroke-width="3.2" fill="none" stroke-linejoin="round"/></svg><div class="tx" style="left:64.5px">用户访问监测</div><div class="ar"></div></div>
<div class="row" style="top:766px"><svg class="ic" viewBox="0 0 40 40"><g transform="translate(-0.6,-0.5)"><path d="M9 9.7 A14.8 14.8 0 1 0 30.2 30.3 Z" stroke="#a9acb2" stroke-width="3.5" fill="none" stroke-linejoin="round"/><path d="M12.42 7.06 A14.8 14.8 0 0 1 32.79 26.72" stroke="#a9acb2" stroke-width="3.5" fill="none"/><path d="M16.82 11.44 A9 9 0 0 1 28.21 22.63" stroke="#a9acb2" stroke-width="3.5" fill="none"/><path d="M16.3 14.4 A6.9 6.9 0 0 1 24.5 22 Z" fill="#a9acb2"/></g></svg><div class="tx" style="left:64.5px">可用性监测</div><div class="ar"></div></div>
<div class="row" style="top:834px"><svg class="ic" viewBox="0 0 40 40"><path d="M19 4.2 Q12.5 8.8 5.7 8.8 V21 Q5.7 29 19 34.2 Q32.3 29 32.3 21 V8.8 Q25.5 8.8 19 4.2 Z" stroke="#a9acb2" stroke-width="3.4" fill="none" stroke-linejoin="miter"/><path d="M12.8 18.4 H25.2 M19 12.2 V24.6" stroke="#a9acb2" stroke-width="3.4" fill="none"/></svg><div class="tx" style="left:64.5px">安全监测</div><div class="ar"></div></div>
<div class="row" style="top:902px"><svg class="ic" viewBox="0 0 40 40"><rect x="9.9" y="5.1" width="18.1" height="6.3" rx="2.2" stroke="#a9acb2" stroke-width="3.2" fill="none"/><rect x="9.9" y="15.9" width="18.1" height="6" rx="2.2" stroke="#a9acb2" stroke-width="3.2" fill="none"/><rect x="9.9" y="26.6" width="18.1" height="6.2" rx="2.2" stroke="#a9acb2" stroke-width="3.2" fill="none"/><path d="M28 8.2 H31 a2.6 2.6 0 0 1 2.6 2.6 V16.3 a2.6 2.6 0 0 1 -2.6 2.6 H28" stroke="#a9acb2" stroke-width="3.2" fill="none"/><path d="M9.9 18.9 H6.9 a2.6 2.6 0 0 0 -2.6 2.6 V27.1 a2.6 2.6 0 0 0 2.6 2.6 H9.9" stroke="#a9acb2" stroke-width="3.2" fill="none"/></svg><div class="tx" style="left:64.5px">CI 可视化</div><div class="ar"></div></div>
<div class="row" style="top:970px"><svg class="ic" viewBox="0 0 40 40"><path d="M7.8 28 V16 a11.2 11.2 0 0 1 22.4 0 V28 Z" stroke="#a9acb2" stroke-width="3.6" fill="none"/><path d="M7 33.6 H31" stroke="#a9acb2" stroke-width="3.4" stroke-linecap="round"/><path d="M18.90 11.00 L25.14 14.60 L25.14 21.80 L18.90 25.40 L12.66 21.80 L12.66 14.60 Z M18.9 15.6 a2.6 2.6 0 1 0 0.01 0 Z" fill="#a9acb2" fill-rule="evenodd"/></svg><div class="tx" style="left:64.5px">监控</div><div class="ar"></div></div>
</div></body></html>
